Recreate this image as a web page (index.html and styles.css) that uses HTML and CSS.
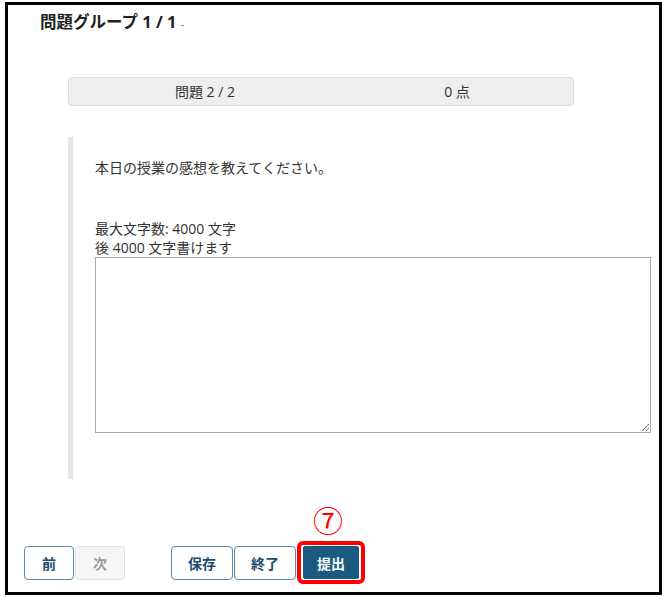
FILE: index.html
```html
<!DOCTYPE html>
<html lang="ja">
<head>
    <meta charset="UTF-8">
    <meta name="viewport" content="width=device-width, initial-scale=1.0">
    <title>問題グループ</title>
    <link rel="stylesheet" href="styles.css">
</head>
<body>
    <div class="frame">
        <h1 class="group-title">問題グループ 1 / 1 <span class="dash">-</span></h1>
        <div class="progress">
            <div class="progress-cell">問題 2 / 2</div>
            <div class="progress-cell">0 点</div>
        </div>
        <div class="question">
            <p class="question-text">本日の授業の感想を教えてください。</p>
            <div class="limit">
                <div>最大文字数: 4000 文字</div>
                <div>後 4000 文字書けます</div>
            </div>
            <textarea class="answer"></textarea>
        </div>
        <div class="nav">
            <div class="nav-group">
                <button class="btn">前</button>
                <button class="btn disabled" disabled>次</button>
            </div>
            <div class="nav-group">
                <button class="btn">保存</button>
                <button class="btn">終了</button>
                <div class="highlight">
                    <span class="marker">⑦</span>
                    <button class="btn primary">提出</button>
                </div>
            </div>
        </div>
    </div>
</body>
</html>
```

FILE: styles.css
```css
body {
    margin: 0;
    padding: 0;
    background: #fff;
    font-family: 'Open Sans', 'Noto Sans CJK JP', sans-serif;
    color: #333;
}
.frame {
    box-sizing: border-box;
    width: 657px;
    height: 593px;
    margin: 2px 0 0 5px;
    border: 3px solid #000;
    position: relative;
}
.group-title {
    margin: 0;
    padding: 7px 0 0 32px;
    font-size: 16.5px;
    line-height: 20px;
    font-weight: bold;
    color: #222;
}
.group-title .dash {
    font-size: 11px;
    line-height: 11px;
    font-weight: normal;
    color: #666;
}
.progress {
    display: flex;
    box-sizing: border-box;
    width: 506px;
    height: 29px;
    margin: 45px 0 0 60px;
    background: #eeeeee;
    border: 1px solid #dcdcdc;
    border-radius: 4px;
}
.progress-cell {
    flex: 1;
    padding-left: 20px;
    text-align: center;
    font-size: 14px;
    line-height: 27px;
}
.question {
    box-sizing: border-box;
    width: 590px;
    margin: 31px 0 0 60px;
    padding: 21px 0 46px 22px;
    border-left: 5px solid #e6e6e6;
    font-size: 14px;
    line-height: 19px;
}
.question-text {
    margin: 0;
}
.limit {
    margin-top: 42px;
}
.answer {
    display: block;
    box-sizing: border-box;
    width: 556px;
    height: 176px;
    margin: 0;
    border: 1px solid #a9a9a9;
    font-family: inherit;
}
.nav {
    display: flex;
    gap: 46px;
    margin: 62px 0 0 16px;
}
.nav-group {
    display: flex;
    align-items: center;
    gap: 1px;
}
.btn {
    box-sizing: border-box;
    height: 34px;
    padding: 0 16px;
    background: #fff;
    border: 1px solid #5c8aa8;
    border-radius: 4px;
    color: #1d4c6c;
    font-family: 'Noto Sans CJK JP', sans-serif;
    font-size: 14px;
    font-weight: bold;
    min-width: 50px;
}
.btn.disabled {
    border-color: #e2e2e2;
    background: #f6f6f6;
    color: #9a9a9a;
}
.highlight {
    position: relative;
    padding: 1px 2px;
    border: 4px solid #ff0000;
    border-radius: 6px;
}
.btn.primary {
    display: block;
    height: 33px;
    width: 56px;
    padding: 0;
    background: #1b5a80;
    border-color: #1b5a80;
    border-radius: 2px;
    color: #fff;
}
.marker {
    position: absolute;
    left: 12px;
    top: -40px;
    font-family: 'DejaVu Serif', 'Noto Sans CJK JP', serif;
    font-size: 30px;
    line-height: 34px;
    color: #ff0000;
}
```
